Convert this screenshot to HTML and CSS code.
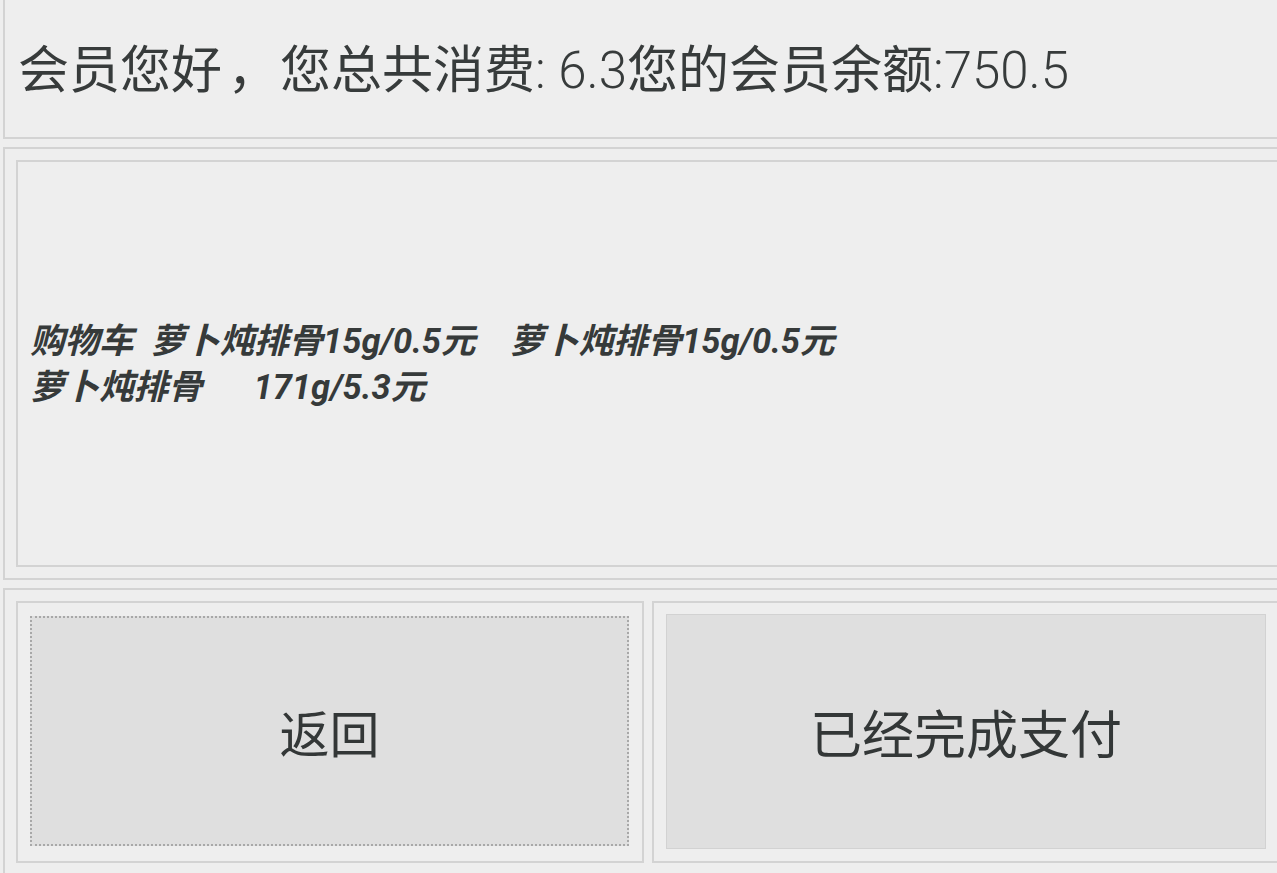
FILE: index.html
```html
<!DOCTYPE html>
<html lang="zh-CN">
<head>
<meta charset="utf-8">
<title>会员支付</title>
<link rel="stylesheet" href="styles.css">
</head>
<body>
<div class="screen">
  <div class="panel panel-top">
    <div class="summary">会员您好<span class="comma">，</span>您总共消费<span class="num">: 6.3</span>您的会员余额<span class="num">:750.5</span></div>
  </div>
  <div class="panel panel-cart">
    <div class="cart-box">
      <div class="cart-text">购物车  萝卜炖排骨15g/0.5元    萝卜炖排骨15g/0.5元
萝卜炖排骨      171g/5.3元</div>
    </div>
  </div>
  <div class="panel panel-actions">
    <div class="cell">
      <div class="btn btn-focused">返回</div>
    </div>
    <div class="cell">
      <div class="btn btn-wide">已经完成支付</div>
    </div>
  </div>
</div>
</body>
</html>
```

FILE: styles.css
```css
html, body {
  margin: 0;
  padding: 0;
  overflow: hidden;
  background: #eeeeee;
}

.screen {
  width: 1300px;
  height: 873px;
  overflow: hidden;
  display: flex;
  flex-direction: column;
  font-family: Roboto, "Noto Sans CJK SC", sans-serif;
  color: #373b3b;
}

.panel {
  flex-shrink: 0;
  margin-left: 3px;
  border: 2px solid #d3d3d3;
  box-sizing: border-box;
}

.panel-top {
  border-top: 0;
  height: 139px;
  display: flex;
  align-items: center;
  padding: 5px 0 0 13px;
}

.summary {
  font-size: 51px;
  line-height: 60px;
  white-space: nowrap;
}

.comma {
  display: inline-block;
  width: 58px;
  text-align: center;
  padding-left: 4px;
  box-sizing: border-box;
}

.num {
  font-weight: 300;
  font-size: 51px;
}

.panel-cart {
  margin-top: 8px;
  padding: 11px;
}

.cart-box {
  border: 2px solid #d3d3d3;
  height: 407px;
  box-sizing: border-box;
  display: flex;
  align-items: center;
  padding: 0 0 0 12px;
}

.cart-text {
  white-space: pre;
  font-size: 34.5px;
  line-height: 46px;
  font-weight: bold;
  font-style: italic;
  color: #363a3a;
}

.panel-actions {
  margin-top: 8px;
  padding: 11px;
  display: flex;
  gap: 8px;
}

.cell {
  flex-shrink: 0;
  width: 628px;
  height: 262px;
  box-sizing: border-box;
  border: 2px solid #d3d3d3;
  padding: 11px 12px 12px 12px;
  display: flex;
}

.btn {
  flex: 1;
  background: #dfdfdf;
  border: 1px solid #d2d2d2;
  display: flex;
  align-items: center;
  justify-content: center;
  font-size: 50px;
  color: #333737;
}

.btn-wide {
  font-size: 52px;
}

.btn-focused {
  margin: 2px 1px 3px 0;
  border: 2px dotted #a8a8a8;
}
```
